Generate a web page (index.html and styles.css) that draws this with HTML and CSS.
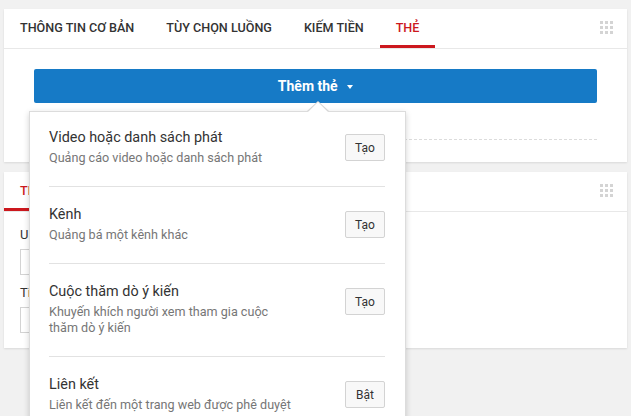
FILE: index.html
```html
<!DOCTYPE html>
<html lang="vi">
<head>
    <meta charset="UTF-8">
    <title>Thẻ</title>
    <link rel="stylesheet" href="styles.css">
</head>
<body>
    <div class="card">
        <div class="tabs">
            <div class="tab">Thông tin cơ bản</div>
            <div class="tab">Tùy chọn luồng</div>
            <div class="tab">Kiếm tiền</div>
            <div class="tab active">Thẻ</div>
            <div class="grip"><span></span><span></span><span></span><span></span><span></span><span></span><span></span><span></span><span></span></div>
        </div>
        <div class="card-body">
            <button class="add-btn">Thêm thẻ <span class="caret"></span></button>
            <div class="dashed"></div>
        </div>
    </div>

    <div class="card">
        <div class="tabs">
            <div class="tab active">Thông tin thẻ</div>
            <div class="grip"><span></span><span></span><span></span><span></span><span></span><span></span><span></span><span></span><span></span></div>
        </div>
        <div class="card-body form">
            <label class="field-label">URL</label>
            <div class="input"></div>
            <label class="field-label second">Tiêu đề</label>
            <div class="input"></div>
        </div>
    </div>

    <div class="menu">
        <div class="menu-item first">
            <div class="item-text">
                <div class="item-title">Video hoặc danh sách phát</div>
                <div class="item-desc">Quảng cáo video hoặc danh sách phát</div>
            </div>
            <button class="small-btn">Tạo</button>
        </div>
        <div class="menu-item">
            <div class="item-text">
                <div class="item-title">Kênh</div>
                <div class="item-desc">Quảng bá một kênh khác</div>
            </div>
            <button class="small-btn">Tạo</button>
        </div>
        <div class="menu-item">
            <div class="item-text">
                <div class="item-title">Cuộc thăm dò ý kiến</div>
                <div class="item-desc narrow">Khuyến khích người xem tham gia cuộc thăm dò ý kiến</div>
            </div>
            <button class="small-btn">Tạo</button>
        </div>
        <div class="menu-item">
            <div class="item-text">
                <div class="item-title">Liên kết</div>
                <div class="item-desc">Liên kết đến một trang web được phê duyệt</div>
            </div>
            <button class="small-btn">Bật</button>
        </div>
    </div>
</body>
</html>
```

FILE: styles.css
```css
body {
    font-family: Roboto, "Liberation Sans", Arial, sans-serif;
    background-color: #f1f1f1;
    margin: 0;
    padding: 9px 4px 0 4px;
    color: #333;
}

.card {
    background-color: white;
    width: 623px;
    margin-bottom: 10px;
    box-shadow: 0 1px 2px rgba(0, 0, 0, 0.1);
}

.tabs {
    display: flex;
    height: 40px;
    border-bottom: 1px solid #e8e8e8;
    box-sizing: border-box;
}

.tab {
    padding: 0 16px;
    line-height: 37px;
    font-size: 12.6px;
    font-weight: 500;
    text-transform: uppercase;
    color: #333;
    border-bottom: 3px solid transparent;
}

.tab.active {
    color: #cc181e;
    border-bottom-color: #cc181e;
}

.grip {
    margin-left: auto;
    margin-right: 14px;
    margin-top: 12px;
    width: 13px;
    height: 13px;
    display: grid;
    grid-template-columns: 3px 3px 3px;
    grid-template-rows: 3px 3px 3px;
    gap: 2px;
}

.grip span {
    background-color: #d4d4d4;
}

.card-body {
    padding: 20px 30px 22px 30px;
}

.add-btn {
    display: block;
    width: 100%;
    height: 34px;
    border: none;
    border-radius: 2px;
    background-color: #167ac6;
    color: white;
    font-family: inherit;
    font-size: 14px;
    font-weight: 700;
}

.caret {
    display: inline-block;
    margin-left: 6px;
    vertical-align: middle;
    border-top: 4px solid white;
    border-left: 3px solid transparent;
    border-right: 3px solid transparent;
}

.dashed {
    margin-top: 36px;
    border-top: 1px dashed #dcdcdc;
}

.form {
    padding: 14px 16px 15px 16px;
}

.field-label {
    display: block;
    font-size: 13px;
    line-height: 17px;
    color: #333;
}

.field-label.second {
    margin-top: 9px;
}

.input {
    margin-top: 6px;
    width: 300px;
    height: 26px;
    box-sizing: border-box;
    border: 1px solid #d3d3d3;
}

/* dropdown de "Thêm thẻ" */
.menu {
    position: absolute;
    left: 29px;
    top: 111px;
    width: 377px;
    height: 330px;
    box-sizing: border-box;
    padding: 0 20px 0 19px;
    background-color: white;
    border: 1px solid #dcdcdc;
    box-shadow: 0 2px 6px rgba(0, 0, 0, 0.18);
}

.menu::before {
    content: "";
    position: absolute;
    top: -11px;
    left: 277px;
    border-bottom: 10px solid #d6d6d6;
    border-left: 11px solid transparent;
    border-right: 11px solid transparent;
}

.menu::after {
    content: "";
    position: absolute;
    top: -10px;
    left: 278px;
    border-bottom: 10px solid white;
    border-left: 10px solid transparent;
    border-right: 10px solid transparent;
}

.menu-item {
    display: flex;
    align-items: flex-start;
    padding: 18px 0 20px 0;
    border-bottom: 1px solid #e2e2e2;
}

.menu-item.first {
    padding-top: 16px;
}

.item-text {
    flex: 1;
}

.item-title {
    font-size: 14.4px;
    line-height: 20px;
    color: #333;
    margin-bottom: 2px;
}

.item-desc {
    font-size: 12.6px;
    line-height: 16px;
    color: #767676;
}

.item-desc.narrow {
    width: 240px;
}

.small-btn {
    margin-top: 6px;
    height: 27px;
    min-width: 40px;
    padding: 0 9px;
    border: 1px solid #d3d3d3;
    border-radius: 2px;
    background-color: #f8f8f8;
    font-family: inherit;
    font-size: 12px;
    color: #333;
}
```
